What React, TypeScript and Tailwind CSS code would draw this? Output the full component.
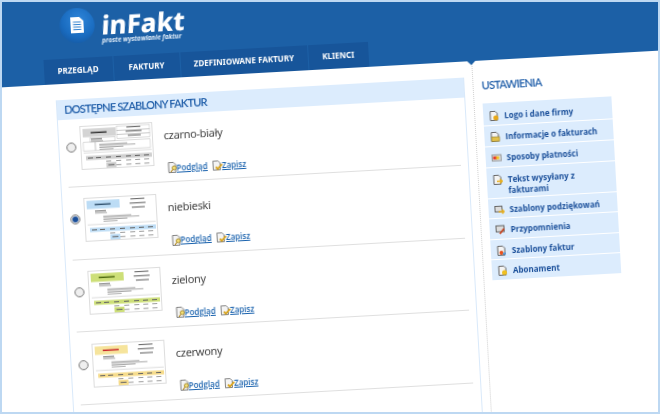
import React from "react";

const tabs = [
  { label: "PRZEGLĄD", w: "w-[70px]" },
  { label: "FAKTURY", w: "w-[67px]" },
  { label: "ZDEFINIOWANE FAKTURY", w: "w-[128px]" },
  { label: "KLIENCI", w: "w-[61px]" },
];

type Theme = { name: string; head: string; table: string; title: string; selected?: boolean; boxed?: boolean };
const templates: Theme[] = [
  { name: "czarno-biały", head: "#d4d4d4", table: "#cfcfcf", title: "#333333", boxed: true },
  { name: "niebieski", head: "#bcdcf5", table: "#bcdcf5", title: "#33536f", selected: true },
  { name: "zielony", head: "#cddf78", table: "#cddf78", title: "#4f6a10" },
  { name: "czerwony", head: "#f6e49c", table: "#f6dc8c", title: "#c8242a" },
];

function Thumb({ t }: { t: Theme }) {
  const L = "#8a8a8a";
  const lines = (x: number, y: number, ws: number[]) =>
    ws.map((w, i) => <rect key={i} x={x} y={y + i * 1.6} width={w} height={0.7} fill={L} />);
  const cols = [6, 14, 24, 34, 44, 53, 62];
  return (
    <svg width="73" height="44" viewBox="0 0 73 42" preserveAspectRatio="none" className="shrink-0 block">
      <rect x="0.5" y="0.5" width="72" height="41" fill="#fff" stroke="#dddddd" />
      <rect x="3" y="3" width="33" height="8" fill={t.head} />
      <rect x="11" y="6.3" width="16" height="1.4" fill={t.title} />
      {t.boxed && (
        <g fill="none" stroke="#bbbbbb" strokeWidth="0.5">
          <rect x="37" y="2" width="33" height="4" />
          <rect x="37" y="6" width="33" height="4" />
          <rect x="37" y="10" width="33" height="4" />
          <rect x="10" y="12" width="25" height="4" />
          <rect x="3" y="16" width="12" height="8" />
          <rect x="15" y="16" width="55" height="8" />
        </g>
      )}
      <rect x="47" y="3" width="14" height=".9" fill="#555" />
      <rect x="46" y="7" width="16" height=".9" fill="#555" />
      <rect x="48" y="11" width="13" height=".9" fill="#555" />
      <rect x="11" y="12.8" width="11" height=".9" fill="#555" />
      {lines(11, 14.8, [12])}
      {lines(19, 18, [28, 36, 24, 14])}
      <line x1="3" y1="26" x2="71" y2="26" stroke="#bbbbbb" strokeWidth="0.5" />
      <rect x="5" y="29" width="66" height="4" fill={t.table} />
      {cols.map((x) => (
        <rect key={x} x={x + 1} y={30.5} width={5} height={1} fill="#666" />
      ))}
      {cols.slice(2).map((x) => (
        <rect key={x} x={x + 1} y={34.5} width={5} height={0.8} fill={L} />
      ))}
      <rect x="25" y="36" width="10" height="5" fill={t.table} />
      <rect x="27" y="38" width="6" height="1" fill="#666" />
      {cols.slice(3).map((x) => (
        <rect key={x} x={x + 1} y={38.5} width={5} height={0.8} fill={L} />
      ))}
    </svg>
  );
}

function PreviewIcon() {
  return (
    <svg width="10" height="11" viewBox="0 0 10 11" className="shrink-0">
      <path d="M1 .5h5l2 2v8H1z" fill="#f4f4f4" stroke="#666" strokeWidth=".8" />
      <circle cx="6.5" cy="6" r="2" fill="#f5e27a" stroke="#9a7b18" strokeWidth=".8" />
      <path d="M5 7.5 3 10" stroke="#b58a1c" strokeWidth="1.2" />
    </svg>
  );
}

function SaveIcon() {
  return (
    <svg width="10" height="10" viewBox="0 0 10 10" className="shrink-0">
      <path d="M.5.5h5l2 2v7h-7z" fill="#f4f4f4" stroke="#666" strokeWidth=".8" />
      <path d="M3 6.5 5 8.5 9.5 4" fill="none" stroke="#d9a520" strokeWidth="1.8" />
    </svg>
  );
}

function Row({ t }: { t: Theme }) {
  return (
    <div className="mx-[7px] h-[72.6px] pt-[11.3px] flex items-start border-b border-[#dfdfdf]">
      <div className="mt-[16px] w-[10px] h-[10px] rounded-full border border-[#777] bg-[#efefef] shrink-0 flex items-center justify-center">
        {t.selected && <div className="w-[6px] h-[6px] rounded-full bg-[#1a4f9a]" />}
      </div>
      <div className="ml-[3.5px]">
        <Thumb t={t} />
      </div>
      <div className="ml-[11.3px] flex flex-col">
        <div className="text-[11px] tracking-[-0.3px] leading-[14px] text-[#444] mt-[7px] whitespace-nowrap">{t.name}</div>
        <div className="flex items-center mt-[20px] ml-[2px] text-[8px] leading-[12px] font-semibold text-[#1b63ae] font-['Open_Sans',sans-serif]">
          <PreviewIcon />
          <span className="underline ml-[-1px] w-[36px]">Podgląd</span>
          <SaveIcon />
          <span className="underline ml-[-0.5px]">Zapisz</span>
        </div>
      </div>
    </div>
  );
}

const D = "#f4f4f4";
const S = "#666";
const menuIcons: React.ReactNode[] = [
  <><path d="M1 .5h5l2 2v7H1z" fill={D} stroke={S} /><circle cx="6.5" cy="7" r="2.5" fill="#e8a818" /></>,
  <><path d="M1 .5h5l2 2v7H1z" fill={D} stroke={S} /><rect x="1" y="5" width="8" height="4.5" fill="#e2c04a" stroke="#8c7a30" strokeWidth=".6" /></>,
  <><rect x=".5" y="2" width="9" height="6" fill="#dddddd" stroke="#999" /><rect x="1.5" y="3.5" width="3.5" height="3" fill="#e33a2a" /><rect x="4.5" y="3.5" width="3" height="3" fill="#f2c21c" /></>,
  <><path d="M1 .5h5l2 2v7H1z" fill={D} stroke={S} /><path d="M4 6.5h5M7 4.5 9.5 6.5 7 8.5" stroke="#e8b020" strokeWidth="1.5" fill="none" /></>,
  <><rect x=".5" y="1.5" width="7" height="5.5" fill="#dcdcdc" stroke={S} /><path d="M4 7h5.5M7.5 5l2 2-2 2" stroke="#e8b020" strokeWidth="1.5" fill="none" /></>,
  <><rect x=".5" y="1" width="8" height="6" fill="#dcdcdc" stroke={S} /><path d="M8.5 4 4 9" stroke="#c8401c" strokeWidth="1.8" /></>,
  <><path d="M1 .5h5l2 2v7H1z" fill={D} stroke={S} /><circle cx="4.5" cy="7" r="2" fill="#e8501c" /><rect x="6" y="7" width="3" height="2" fill="#5b9bd8" /></>,
  <><path d="M1 .5h5l2 2v7H1z" fill={D} stroke={S} /><circle cx="6.5" cy="7" r="2.5" fill="#f0c020" /></>,
];

const menu = [
  { label: "Logo i dane firmy", box: "h-[23px] pt-[7px]" },
  { label: "Informacje o fakturach", box: "h-[21px] pt-[5px]" },
  { label: "Sposoby płatności", box: "h-[21px] pt-[5px]" },
  { label: "Tekst wysyłany z fakturami", box: "h-[31px] pt-[6px]" },
  { label: "Szablony podziękowań", box: "h-[20.5px] pt-[5px]" },
  { label: "Przypomnienia", box: "h-[20.5px] pt-[5px]" },
  { label: "Szablony faktur", box: "h-[20.5px] pt-[5px]" },
  { label: "Abonament", box: "h-[20.5px] pt-[5px]" },
];

export default function App() {
  return (
    <div className="relative w-[660px] h-[414px] overflow-hidden bg-white">
      <div className="w-[780px] ml-[-30px] origin-top-left rotate-[-3.2deg] blur-[0.35px] bg-white font-['Noto_Sans',sans-serif]">
        {/* header */}
        <header className="relative h-[88.5px] bg-[#1c60a6] flex flex-col justify-between">
          <div className="flex items-start pl-[88px] pt-[13.5px]">
            <div className="w-[35px] h-[35px] rounded-full bg-[radial-gradient(circle_at_55%_35%,#2f86da,#1a6cc0_55%,#124f94)] flex items-center justify-center shrink-0">
              <svg width="15" height="18" viewBox="0 0 15 18">
                <path d="M1 1h9l4 4v12H1z" fill="#fff" />
                <path d="M3.5 6h8M3.5 8.5h8M3.5 11h8M3.5 13.5h8" stroke="#2f7fcf" strokeWidth="1" />
              </svg>
            </div>
            <div className="ml-[6.5px] flex flex-col mt-[1px]">
              <div className="text-[26px] leading-[34px] font-extrabold text-white -skew-x-6 whitespace-nowrap">inFakt</div>
              <div className="text-[6.4px] leading-[9px] font-bold italic text-[#e4effa] mt-[-5.5px] whitespace-nowrap font-['Open_Sans',sans-serif]">proste wystawianie faktur</div>
            </div>
          </div>
          <nav className="flex pl-[69.5px] h-[24.5px]">
            {tabs.map((t) => (
              <div key={t.label} className={`${t.w} h-full bg-[#17559a] border-r border-[#1c60a6] flex items-center justify-center text-[8px] font-bold text-white whitespace-nowrap`}>
                {t.label}
              </div>
            ))}
          </nav>
          <div className="absolute left-[492px] top-[88px] w-0 h-0 border-l-[5px] border-r-[5px] border-t-[5px] border-l-transparent border-r-transparent border-t-[#1c60a6]" />
        </header>

        <main className="flex h-[400px]">
          {/* left panel */}
          <section className="ml-[80px] mt-[16px] w-[409px] border-x border-[#d9e9fa] shrink-0">
            <h2 className="h-[20px] bg-[#dcecfd] pl-[7px] text-[11px] tracking-[-0.8px] leading-[20px] font-semibold text-[#1d5ca8] whitespace-nowrap font-['Lato',sans-serif]">
              DOSTĘPNE SZABLONY FAKTUR
            </h2>
            <div className="mt-[-4px]">
              {templates.map((t) => (
                <Row key={t.name} t={t} />
              ))}
            </div>
          </section>

          {/* sidebar */}
          <aside className="ml-[8px] border-l border-dotted border-[#cfcfcf] pl-[8px] w-[145px] shrink-0">
            <h3 className="mt-[17px] text-[11px] tracking-[-0.7px] leading-[16px] font-semibold text-[#1d5ca8] font-['Lato',sans-serif]">USTAWIENIA</h3>
            <ul className="mt-[10px] w-[129px] flex flex-col">
              {menu.map((m, i) => (
                <li
                  key={m.label}
                  className={`flex items-start bg-[#dcecfd] border-b border-white pl-[6px] pr-[6px] ${m.box} text-[8px] leading-[11px] font-bold text-[#1a4f9a] font-['Open_Sans',sans-serif]`}
                >
                  <svg width="10" height="10" viewBox="0 0 10 10" className="shrink-0 mt-[1px]">
                    {menuIcons[i]}
                  </svg>
                  <span className="ml-[5px]">{m.label}</span>
                </li>
              ))}
            </ul>
          </aside>
        </main>
      </div>
      <div className="absolute inset-0 border-2 border-[#bdd8f2] pointer-events-none" />
    </div>
  );
}
